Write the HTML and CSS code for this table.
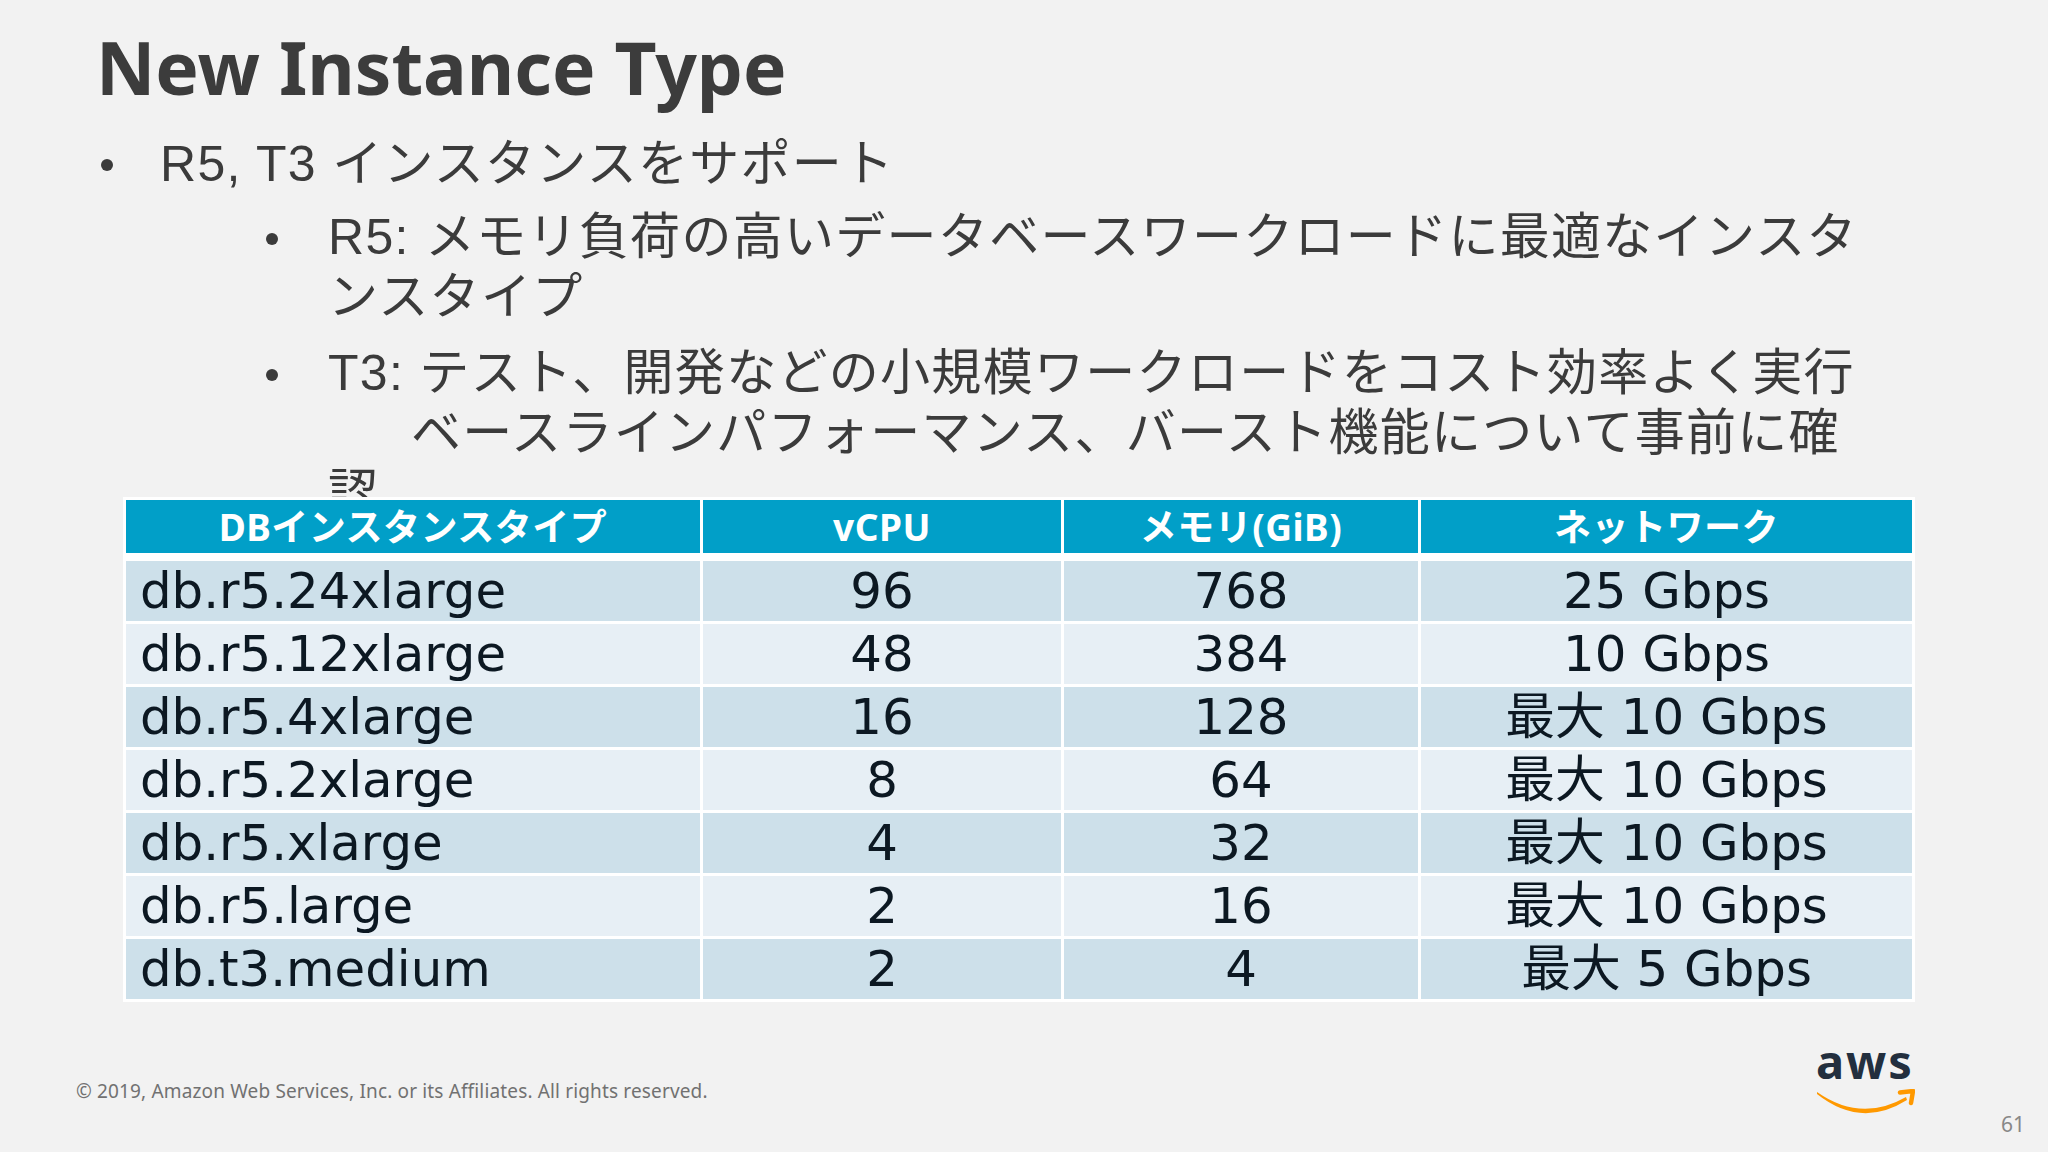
FILE: index.html
```html
<!DOCTYPE html>
<html lang="ja">
<head>
<meta charset="utf-8">
<title>New Instance Type</title>
<link rel="stylesheet" href="styles.css">
</head>
<body>
<div class="slide">
  <h1 class="title">New Instance Type</h1>

  <div class="content">
    <ul class="l1">
      <li>
        <div class="item"><span class="dot"></span><span class="text">R5, T3 インスタンスをサポート</span></div>
        <ul class="l2">
          <li class="item"><span class="dot"></span><span class="text">R5: メモリ負荷の高いデータベースワークロードに最適なインスタ<br>ンスタイプ</span></li>
          <li class="item"><span class="dot"></span><span class="text">T3: テスト、開発などの小規模ワークロードをコスト効率よく実行<br><span class="tab"></span>ベースラインパフォーマンス、バースト機能について事前に確<br>認</span></li>
        </ul>
      </li>
    </ul>
  </div>

  <table class="specs">
    <colgroup>
      <col class="c1"><col class="c2"><col class="c3"><col class="c4">
    </colgroup>
    <thead>
      <tr><th>DBインスタンスタイプ</th><th>vCPU</th><th>メモリ(GiB)</th><th>ネットワーク</th></tr>
    </thead>
    <tbody>
      <tr class="odd"><td class="name">db.r5.24xlarge</td><td>96</td><td>768</td><td>25 Gbps</td></tr>
      <tr class="even"><td class="name">db.r5.12xlarge</td><td>48</td><td>384</td><td>10 Gbps</td></tr>
      <tr class="odd"><td class="name">db.r5.4xlarge</td><td>16</td><td>128</td><td><span class="jp">最大</span> 10 Gbps</td></tr>
      <tr class="even"><td class="name">db.r5.2xlarge</td><td>8</td><td>64</td><td><span class="jp">最大</span> 10 Gbps</td></tr>
      <tr class="odd"><td class="name">db.r5.xlarge</td><td>4</td><td>32</td><td><span class="jp">最大</span> 10 Gbps</td></tr>
      <tr class="even"><td class="name">db.r5.large</td><td>2</td><td>16</td><td><span class="jp">最大</span> 10 Gbps</td></tr>
      <tr class="odd"><td class="name">db.t3.medium</td><td>2</td><td>4</td><td><span class="jp">最大</span> 5 Gbps</td></tr>
    </tbody>
  </table>

  <footer class="footer">
    <div class="copy">© 2019, Amazon Web Services, Inc. or its Affiliates. All rights reserved.</div>
    <div class="brand">
      <div class="aws">aws</div>
      <svg class="smile" width="100" height="26" viewBox="0 0 100 26" aria-hidden="true">
        <path d="M2 3 Q 46 34 91 8 L 92 11 Q 46 40 2 5 Z" fill="#ff9900"/>
        <path d="M85 3.5 L98 2 L96 14" fill="none" stroke="#ff9900" stroke-width="4.5" stroke-linejoin="round" stroke-linecap="round"/>
      </svg>
    </div>
    <div class="page">61</div>
  </footer>
</div>
</body>
</html>
```

FILE: styles.css
```css
* { box-sizing: border-box; }

html, body {
  margin: 0;
  padding: 0;
}

body {
  background: #f2f2f2;
  width: 2048px;
  height: 1152px;
  overflow: hidden;
}

.slide {
  width: 2048px;
  height: 1152px;
  display: flex;
  flex-direction: column;
  padding-top: 24px;
  font-family: "Liberation Sans", "Noto Sans CJK JP", sans-serif;
  color: #3b3b3b;
}

.title {
  margin: 0;
  padding-left: 96px;
  font-family: "Noto Sans", sans-serif;
  font-weight: 700;
  font-size: 73px;
  line-height: 86px;
  color: #3c3c3c;
}

.content {
  flex: none;
  height: 387px;
  overflow: hidden;
  padding-top: 24px;
  font-size: 50px;
  line-height: 60px;
  letter-spacing: 1.3px;
}

.l1, .l2 {
  list-style: none;
  margin: 0;
  padding: 0;
}

.l1 { padding-left: 101px; }

.l2 {
  padding-left: 165px;
  margin-top: 13px;
}

.l2 > li + li { margin-top: 16px; }

.item { display: flex; }

.dot {
  flex: none;
  width: 59px;
}

.l2 .dot { width: 62px; }

.dot::before {
  content: "";
  display: block;
  width: 12px;
  height: 12px;
  border-radius: 50%;
  background: #3b3b3b;
  margin-top: 25px;
}

.l2 .dot::before { margin-top: 26px; }

.tab {
  display: inline-block;
  width: 83px;
}

.specs {
  flex: none;
  margin-left: 123px;
  width: 1792px;
  table-layout: fixed;
  border-collapse: separate;
  border-spacing: 3px;
  background: #ffffff;
  font-family: "DejaVu Sans", "Noto Sans CJK JP", sans-serif;
  color: #0c1822;
}

.c1 { width: 574px; }
.c2 { width: 358px; }
.c3 { width: 354px; }
.c4 { width: 491px; }

.specs th {
  height: 58px;
  padding: 0;
  border-bottom: 5px solid #ffffff;
  background: #019fc8;
  color: #ffffff;
  font-family: "Noto Sans", "Noto Sans CJK JP", sans-serif;
  font-weight: 700;
  font-size: 37px;
  letter-spacing: 0.5px;
  line-height: 48px;
  text-align: center;
  vertical-align: middle;
  white-space: nowrap;
}

.specs td {
  height: 60px;
  padding: 0;
  font-size: 49.8px;
  line-height: 60px;
  text-align: center;
  vertical-align: middle;
  white-space: nowrap;
}

.specs td.name {
  text-align: left;
  padding-left: 14px;
}

.specs .odd td { background: #cde0ea; }
.specs .even td { background: #e7eff5; }

.jp { line-height: 50px; }

.footer {
  flex: 1;
  display: flex;
  align-items: flex-start;
  padding: 0 23px 0 76px;
  font-family: "Noto Sans", sans-serif;
}

.copy {
  flex: 1;
  margin-top: 77px;
  font-size: 19px;
  letter-spacing: 0.15px;
  line-height: 24px;
  color: #717171;
}

.brand {
  width: 100px;
  margin-top: 37px;
  margin-right: 86px;
}

.aws {
  font-size: 47px;
  line-height: 45px;
  font-weight: 700;
  letter-spacing: 2px;
  color: #232f3e;
  padding-left: 1px;
}

.smile {
  display: block;
  margin-top: 5px;
}

.page {
  align-self: flex-end;
  margin-bottom: 17px;
  font-size: 21px;
  line-height: 21px;
  color: #888888;
}
```
